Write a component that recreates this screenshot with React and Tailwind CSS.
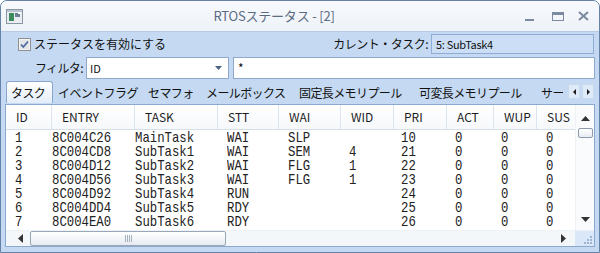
import React from 'react';

const UI = 'font-["Noto_Sans_CJK_JP","Noto_Sans",sans-serif]';

const COLS = [
  { label: 'ID', w: 'w-[46px]', dp: 'pl-[9px]' },
  { label: 'ENTRY', w: 'w-[83px]', dp: 'pl-0' },
  { label: 'TASK', w: 'w-[83px]', dp: 'pl-0' },
  { label: 'STT', w: 'w-[61px]', dp: 'pl-[9px]' },
  { label: 'WAI', w: 'w-[62px]', dp: 'pl-[9px]' },
  { label: 'WID', w: 'w-[53px]', dp: 'pl-[8px]' },
  { label: 'PRI', w: 'w-[53px]', dp: 'pl-[7px]' },
  { label: 'ACT', w: 'w-[47px]', dp: 'pl-[8px]' },
  { label: 'WUP', w: 'w-[43px]', dp: 'pl-[7px]' },
  { label: 'SUS', w: 'w-[38px]', dp: 'pl-[9px]' },
];

const ROWS = [
  ['1', '8C004C26', 'MainTask', 'WAI', 'SLP', '', '10', '0', '0', '0'],
  ['2', '8C004CD8', 'SubTask1', 'WAI', 'SEM', '4', '21', '0', '0', '0'],
  ['3', '8C004D12', 'SubTask2', 'WAI', 'FLG', '1', '22', '0', '0', '0'],
  ['4', '8C004D56', 'SubTask3', 'WAI', 'FLG', '1', '23', '0', '0', '0'],
  ['5', '8C004D92', 'SubTask4', 'RUN', '', '', '24', '0', '0', '0'],
  ['6', '8C004DD4', 'SubTask5', 'RDY', '', '', '25', '0', '0', '0'],
  ['7', '8C004EA0', 'SubTask6', 'RDY', '', '', '26', '0', '0', '0'],
];

const TABS = [
  { label: 'イベントフラグ', w: 'w-[90px]' },
  { label: 'セマフォ', w: 'w-[58px]' },
  { label: 'メールボックス', w: 'w-[93px]' },
  { label: '固定長メモリプール', w: 'w-[120px]' },
  { label: '可変長メモリプール', w: 'w-[122px]' },
  { label: 'サー', w: 'w-[22px]' },
];

export default function App() {
  return (
    <div className={`w-[600px] h-[253px] flex flex-col overflow-hidden rounded-t-[7px] border border-[#6583a8] bg-[#c5daf2] ${UI}`}>
      <TitleBar />
      <div className="flex flex-col pl-[4px] pr-[4px]">
        <div className="h-[24px] flex items-center text-[12px] text-[#111]">
          <Checkbox />
          <span className="ml-[3px]">ステータスを有効にする</span>
          <span className="ml-auto tracking-[-0.5px]">カレント・タスク:</span>
          <div className="ml-[3px] mr-[1px] w-[163px] h-[20px] flex items-center pl-[4px] bg-[#cbdef5] border border-[#8dadd6] text-[11px] tracking-[-0.3px]">
            5: SubTask4
          </div>
        </div>
        <div className="h-[24px] flex items-center text-[12px] text-[#111]">
          <span className="w-[78px] text-right tracking-[-0.6px]">フィルタ:</span>
          <div className="ml-[3px] w-[143px] h-[22px] flex items-center bg-white border border-[#8fa9cc] pl-[3px]">
            <span className="text-[11px]">ID</span>
            <svg className="ml-auto mr-[6px]" width="7" height="4" viewBox="0 0 7 4">
              <path d="M0 0H7L3.5 4Z" fill="#4d6185" />
            </svg>
          </div>
          <div className="ml-[4px] flex-1 h-[22px] flex items-center bg-white border border-[#8fa9cc] pl-[4px] text-[12px]">
            *
          </div>
        </div>
        <TabStrip />
        <ListView />
      </div>
    </div>
  );
}

function TitleBar() {
  return (
    <div className="h-[31px] shrink-0 flex items-center bg-gradient-to-b from-[#f7f9fc] to-[#eef3f9] border-b border-[#b8cbe3]">
      <svg className="ml-[5px]" width="17" height="15" viewBox="0 0 17 15">
        <rect x="0.5" y="0.5" width="16" height="14" fill="#e9edf2" stroke="#8c96a3" />
        <rect x="1" y="1" width="15" height="2" fill="#b9c3cf" />
        <rect x="3" y="4" width="5" height="8" fill="#3d8a5c" />
        <rect x="9" y="4" width="5" height="4" fill="#6d7f95" />
        <rect x="12" y="3" width="3" height="2" fill="#fff" />
      </svg>
      <div className="flex-1 text-center text-[13px] text-[#5b6b82] tracking-[-0.2px]">RTOSステータス - [2]</div>
      <div className="flex items-center mr-[10px]">
        <svg width="9" height="3" viewBox="0 0 9 3" className="mt-[8px]">
          <rect width="9" height="2" fill="#7b8aa0" />
        </svg>
        <svg width="12" height="9" viewBox="0 0 12 9" className="ml-[18px]">
          <rect x="0.5" y="0.5" width="11" height="8" fill="none" stroke="#7b8aa0" />
          <rect x="0" y="0" width="12" height="3" fill="#7b8aa0" />
        </svg>
        <svg width="11" height="10" viewBox="0 0 11 10" className="ml-[14px]">
          <path d="M1 1L10 9M10 1L1 9" stroke="#7b8aa0" strokeWidth="2" />
        </svg>
      </div>
    </div>
  );
}

function Checkbox() {
  return (
    <svg className="ml-[13px]" width="13" height="13" viewBox="0 0 13 13">
      <rect x="0.5" y="0.5" width="12" height="12" fill="#f4f4f4" stroke="#8e8f8f" />
      <rect x="2" y="2" width="9" height="9" fill="#e2e4e7" />
      <path d="M3 6.5L5.3 9L10 3.5" fill="none" stroke="#4f6aa1" strokeWidth="1.8" />
    </svg>
  );
}

function TabStrip() {
  return (
    <div className="h-[23px] flex items-end text-[12px] text-[#111] tracking-[-0.6px] overflow-hidden">
      <div className="ml-[1px] w-[47px] h-[22px] pl-[4px] flex items-center rounded-t-[3px] border border-b-0 border-[#8aa8cf] bg-gradient-to-b from-white to-[#e3edf9]">
        タスク
      </div>
      <div className="ml-[5px] flex h-[20px] items-center">
        {TABS.map(t => (
          <div key={t.label} className={`${t.w} shrink-0 overflow-hidden whitespace-nowrap`}>{t.label}</div>
        ))}
      </div>
      <div className="ml-auto mr-[1px] mb-[4px] flex gap-[2px]">
        <TabArrow dir="left" />
        <TabArrow dir="right" />
      </div>
    </div>
  );
}

function TabArrow({ dir }) {
  return (
    <div className="w-[12px] h-[15px] flex items-center justify-center bg-[#dfeaf8] border border-[#c9d9ee]">
      <svg width="3" height="6" viewBox="0 0 3 6">
        <path d={dir === 'left' ? 'M3 0V6L0 3Z' : 'M0 0V6L3 3Z'} fill="#1a1a1a" />
      </svg>
    </div>
  );
}

function ListView() {
  return (
    <div className="mt-[1px] h-[143px] flex flex-col bg-white border border-[#8ba9cf]">
      <div className="h-[125px] flex">
        <div className="w-[569px] flex flex-col overflow-hidden">
          <div className="h-[25px] flex bg-gradient-to-b from-white to-[#f6f8fb] border-b border-[#d5dfe9] text-[12px] text-[#1d1d1d]">
            {COLS.map((c, i) => (
              <div
                key={c.label}
                className={`${c.w} shrink-0 pl-[10px] flex items-center ${i < COLS.length - 1 ? 'border-r border-[#dce4ee]' : ''}`}
              >
                {c.label}
              </div>
            ))}
          </div>
          <div className="pt-[2px]">
            {ROWS.map(r => (
              <div key={r[0]} className='h-[14px] flex font-["Liberation_Mono",monospace] text-[15px] leading-[14px] text-[#222]'>
                {r.map((v, i) => (
                  <div key={i} className={`${COLS[i].w} ${COLS[i].dp} shrink-0 whitespace-nowrap`}>
                    <span className="inline-block origin-left scale-x-[0.82]">{v}</span>
                  </div>
                ))}
              </div>
            ))}
          </div>
        </div>
        <VScroll />
      </div>
      <HScroll />
    </div>
  );
}

function VScroll() {
  return (
    <div className="flex-1 flex flex-col items-center bg-[#fafbfd] border-l border-[#eef1f5]">
      <svg className="mt-[11px]" width="9" height="5" viewBox="0 0 9 5">
        <path d="M0 5H9L4.5 0Z" fill="#333" />
      </svg>
      <div className="mt-[7px] w-[15px] h-[10px] rounded-[2px] border border-[#8d9aab] bg-gradient-to-b from-white to-[#e7ecf2]" />
      <svg className="mt-auto mb-[8px]" width="9" height="5" viewBox="0 0 9 5">
        <path d="M0 0H9L4.5 5Z" fill="#333" />
      </svg>
    </div>
  );
}

function HScroll() {
  return (
    <div className="h-[16px] flex items-center bg-[#f4f7fa] border-t border-[#eef1f5]">
      <svg className="ml-[12px]" width="5" height="9" viewBox="0 0 5 9">
        <path d="M5 0V9L0 4.5Z" fill="#333" />
      </svg>
      <div className="ml-[7px] w-[196px] h-[15px] rounded-[2px] border border-[#9aa7b8] bg-gradient-to-b from-white to-[#e6ebf1] flex items-center justify-center">
        <svg width="7" height="7" viewBox="0 0 7 7">
          <path d="M0.5 0V7M2.5 0V7M4.5 0V7M6.5 0V7" stroke="#a7b1be" strokeWidth="1" />
        </svg>
      </div>
      <svg className="ml-auto mr-[9px]" width="5" height="9" viewBox="0 0 5 9">
        <path d="M0 0V9L5 4.5Z" fill="#333" />
      </svg>
      <div className="w-[19px] h-full bg-[#d9e7f8] flex items-end justify-end pr-[2px] pb-[2px]">
        <svg width="9" height="9" viewBox="0 0 9 9">
          <g fill="#9fb5cf">
            <rect x="7" y="1" width="2" height="2" />
            <rect x="4" y="4" width="2" height="2" />
            <rect x="7" y="4" width="2" height="2" />
            <rect x="1" y="7" width="2" height="2" />
            <rect x="4" y="7" width="2" height="2" />
            <rect x="7" y="7" width="2" height="2" />
          </g>
        </svg>
      </div>
    </div>
  );
}
